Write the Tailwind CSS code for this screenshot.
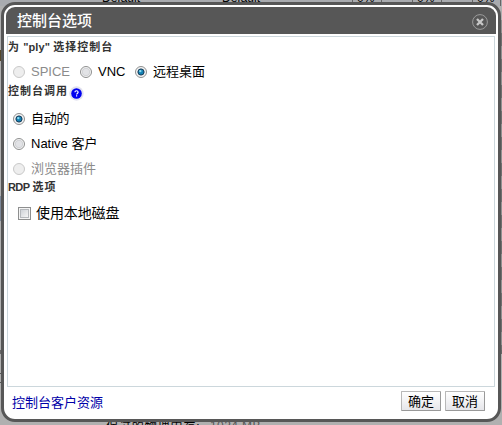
<!DOCTYPE html>
<html lang="zh-CN">
<head>
<meta charset="utf-8">
<title>控制台选项</title>
<script src="https://cdn.jsdelivr.net/npm/@tailwindcss/browser@4"></script>
</head>
<body class="relative w-[502px] h-[425px] overflow-hidden bg-[#b0b0b0] font-['Liberation_Sans','Noto_Sans_CJK_SC',sans-serif] text-[13px] text-black">

<!-- Dimmed page behind the dialog -->
<div class="absolute inset-0 overflow-hidden whitespace-nowrap" aria-hidden="true">
  <div class="absolute left-0 top-0 w-[502px] h-[6px] bg-[#a9abaf]"></div>
  <span class="absolute left-[102px] top-[-9px] text-[12px] leading-[14px]">Default</span>
  <span class="absolute left-[222px] top-[-9px] text-[12px] leading-[14px]">Default</span>
  <span class="absolute left-[352px] top-[-8px] w-[30px] h-[14px] border-x border-[#666] text-[12px] leading-[13px] pl-[4px]">0%</span>
  <span class="absolute left-[412px] top-[-8px] w-[30px] h-[14px] border-x border-[#666] text-[12px] leading-[13px] pl-[4px]">0%</span>
  <span class="absolute left-[472px] top-[-8px] w-[29px] h-[14px] border-x border-[#666] text-[12px] leading-[13px] pl-[4px]">0%</span>
  <div class="absolute left-0 top-[50px] w-[2px] h-[11px] bg-[#554729]"></div>
  <div class="absolute left-0 top-[196px] w-[2px] h-[25px] bg-[#7b8798]"></div>
  <div class="absolute left-0 top-[350px] w-[502px] h-[4px] bg-[#666]"></div>
  <div class="absolute left-0 top-[373px] w-[2px] h-[10px] border-y border-[#555]"></div>
  <div class="absolute right-0 top-[20px] w-[2px] h-[330px] bg-[repeating-linear-gradient(#919191_0_13px,#707070_13px_26px)]"></div>
  <span class="absolute left-[106px] top-[420px] text-[12px] leading-[14px] tracking-[0.9px]">保过的物理内存:</span>
  <span class="absolute left-[210px] top-[419px] text-[12px] leading-[14px] tracking-[0.4px] text-[#555]">1024 MB</span>
</div>

<!-- Dialog -->
<section class="absolute left-[1px] top-[2px] w-[500px] h-[420px] rounded-[14px] border-[3px] border-[#575757] bg-white flex flex-col px-[2px] pt-[2px]">
  <header class="h-[27px] shrink-0 rounded-t-[9px] bg-[#575757] flex items-center justify-between pl-[11px] pr-[8px]">
    <h1 class="pt-px text-[15px] leading-[20px] font-medium text-white">控制台选项</h1>
    <svg class="w-[16px] h-[16px] mt-[3px]" viewBox="0 0 16 16" fill="none">
      <circle cx="8" cy="8" r="7.4" stroke="#9b9b9b"/>
      <path d="M5 5l6 6M11 5l-6 6" stroke="#c8c8c8" stroke-width="2.3"/>
    </svg>
  </header>

  <main class="mt-[2px] mx-px w-[488px] h-[351px] shrink-0 border border-[#ccd7dc] flex flex-col whitespace-nowrap">
    <h2 class="h-[19px] text-[11px] leading-[21px] font-bold text-[#333] tracking-[1px]"><span>为</span><span class="tracking-[0.1px]"> "ply" </span><span>选择控制台</span></h2>
    <div class="mt-[4px] h-[24px] flex items-center pl-[5px]">
      <svg class="w-[12px] h-[12px] mr-[6px]" viewBox="0 0 12 12"><circle cx="6" cy="6" r="5.5" fill="#eee" stroke="#c8c8c8"/></svg>
      <span class="w-[49px] text-[#8b8b8b]">SPICE</span>
      <svg class="w-[12px] h-[12px] mr-[6px]" viewBox="0 0 12 12"><circle cx="6" cy="6" r="5.5" fill="#f7f7f7" stroke="#8e8f8f"/><circle cx="6" cy="6" r="3.8" fill="#e2e3e6" stroke="#c4c6ca" stroke-width=".7"/></svg>
      <span class="w-[37px]">VNC</span>
      <svg class="w-[12px] h-[12px] mr-[6px]" viewBox="0 0 12 12"><circle cx="6" cy="6" r="5.5" fill="#f4f4f4" stroke="#8e8f8f"/><circle cx="6" cy="6" r="3.1" fill="#1482b4" stroke="#183a57"/><circle cx="5.3" cy="5.1" r="1.2" fill="#8bdcf2"/></svg>
      <span>远程桌面</span>
    </div>
    <div class="h-[22px] flex items-start">
      <h2 class="pt-px text-[11px] leading-[12px] font-bold text-[#333] tracking-[1px]">控制台调用</h2>
      <svg class="ml-[1px] mt-[2px] w-[15px] h-[15px]" viewBox="0 0 15 15">
        <circle cx="7.5" cy="7.5" r="7.2" fill="#e2e2ee"/><circle cx="7.5" cy="7.5" r="5.3" fill="#0000f0"/>
        <path d="M5.9 6.3c0-2.1 3.2-2.1 3.2 0 0 1.1-1.5 1.1-1.5 2.2M7.6 9.3v1.3" fill="none" stroke="#fff" stroke-width="1.2"/>
      </svg>
    </div>
    <div class="h-[25px] flex items-center pl-[5px]">
      <svg class="w-[12px] h-[12px] mr-[6px]" viewBox="0 0 12 12"><circle cx="6" cy="6" r="5.5" fill="#f4f4f4" stroke="#8e8f8f"/><circle cx="6" cy="6" r="3.1" fill="#1482b4" stroke="#183a57"/><circle cx="5.3" cy="5.1" r="1.2" fill="#8bdcf2"/></svg>
      <span class="tracking-[-0.3px]">自动的</span>
    </div>
    <div class="h-[25px] flex items-center pl-[5px]">
      <svg class="w-[12px] h-[12px] mr-[6px]" viewBox="0 0 12 12"><circle cx="6" cy="6" r="5.5" fill="#f7f7f7" stroke="#8e8f8f"/><circle cx="6" cy="6" r="3.8" fill="#e2e3e6" stroke="#c4c6ca" stroke-width=".7"/></svg>
      <span>Native 客户</span>
    </div>
    <div class="h-[25px] flex items-center pl-[5px]">
      <svg class="w-[12px] h-[12px] mr-[6px]" viewBox="0 0 12 12"><circle cx="6" cy="6" r="5.5" fill="#eee" stroke="#c8c8c8"/></svg>
      <span class="text-[#8b8b8b]">浏览器插件</span>
    </div>
    <h2 class="h-[12px] pt-px text-[11px] leading-[11px] font-bold text-[#333] flex gap-[3px]"><span class="tracking-[-0.6px]">RDP</span><span class="tracking-[1px]">选项</span></h2>
    <div class="mt-[8px] h-[25px] flex items-center pl-[10px]">
      <span class="w-[13px] h-[13px] mr-[5px] border border-[#8e8f8f] bg-[#f4f4f4] p-px flex"><span class="flex-1 border border-[#b5b8bc] bg-linear-to-br from-[#cfd3d8] to-[#f5f5f5]"></span></span>
      <span class="text-[14px] tracking-[-0.1px]">使用本地磁盘</span>
    </div>
  </main>

  <footer class="flex-1 flex items-start pt-[4px] pl-[6px] pr-[11px] whitespace-nowrap">
    <a class="mt-[2px] leading-[20px] text-[#0000a8]">控制台客户资源</a>
    <div class="ml-auto flex gap-[4px]">
      <button class="w-[40px] h-[20px] border border-[#b8b8b8] border-r-[#999] border-b-[#999] rounded-[1px] bg-linear-to-b from-white to-[#e6e6ea] leading-[19px] text-center">确定</button>
      <button class="w-[40px] h-[20px] border border-[#b8b8b8] border-r-[#999] border-b-[#999] rounded-[1px] bg-linear-to-b from-white to-[#e6e6ea] leading-[19px] text-center">取消</button>
    </div>
  </footer>
</section>
</body>
</html>
